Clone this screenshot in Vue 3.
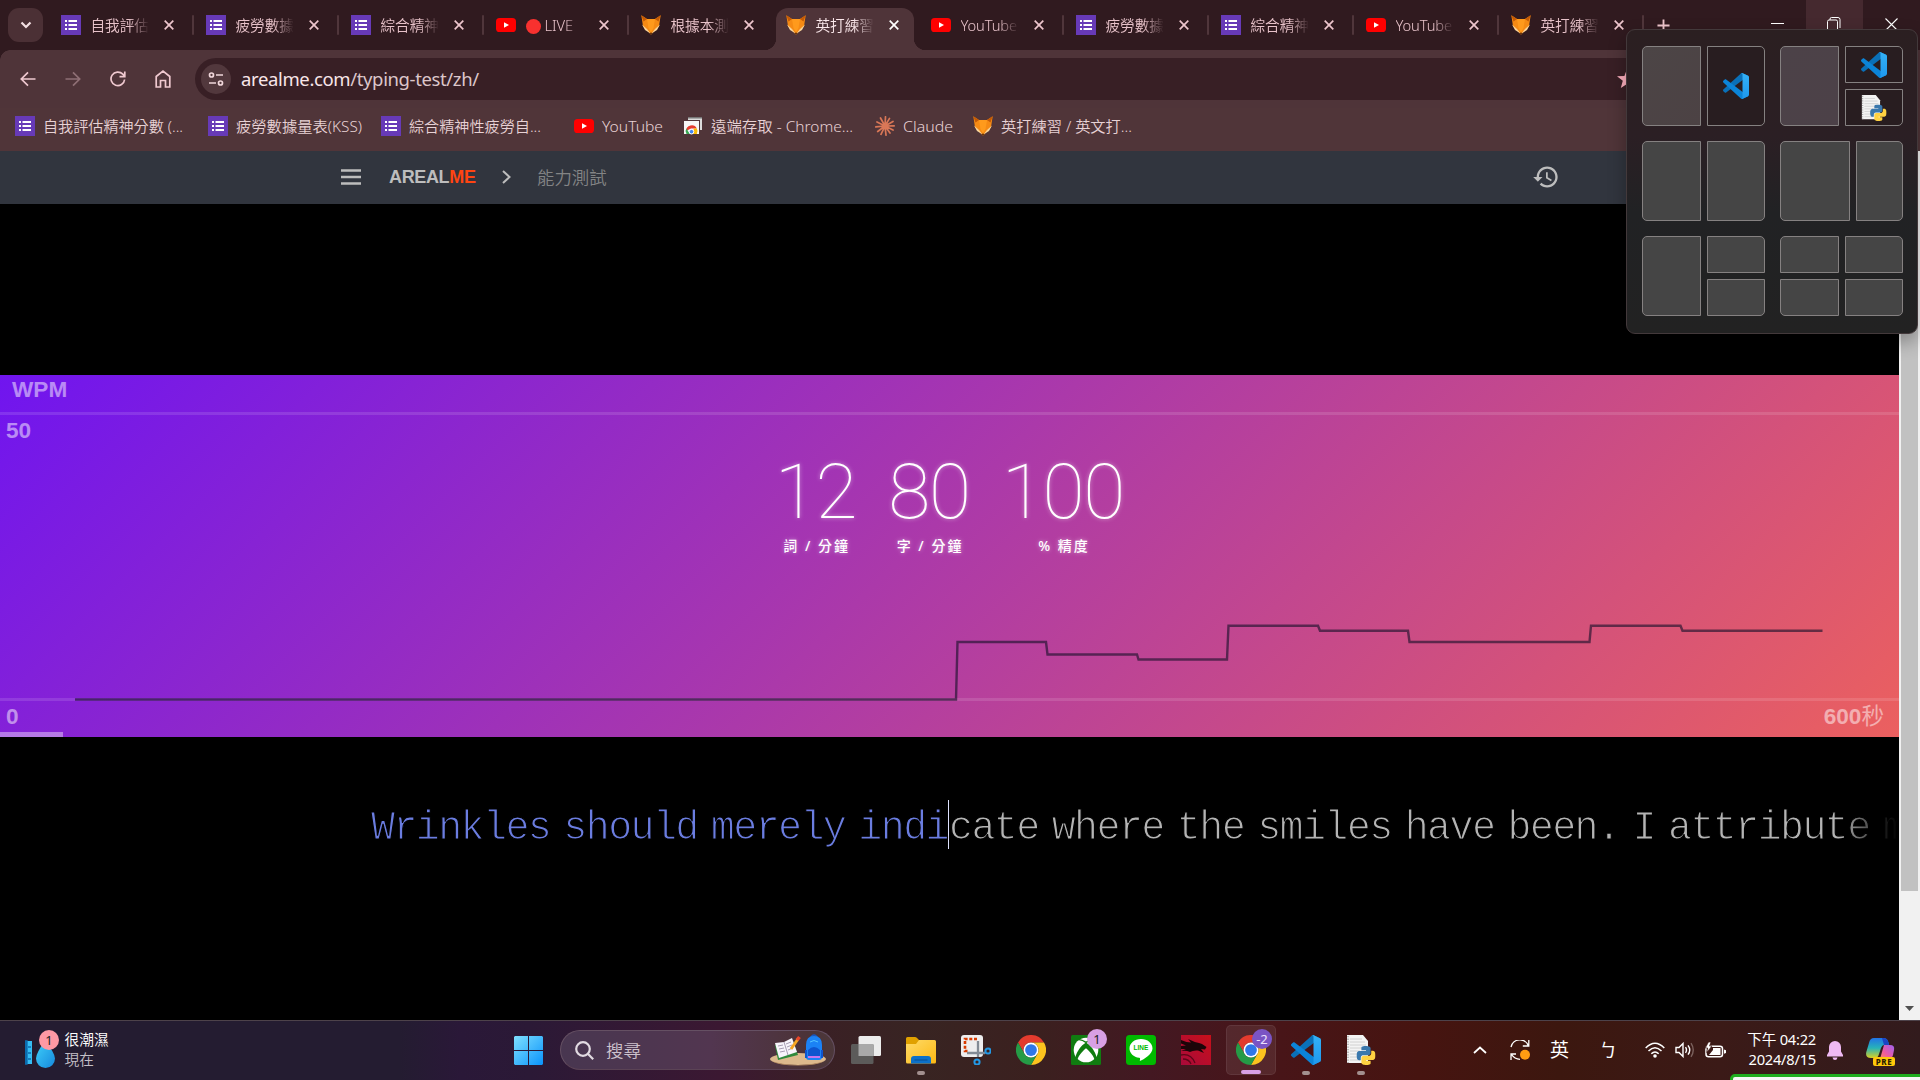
<script setup>
const tabs = [
  { icon: 'forms', title: '自我評估精神' },
  { icon: 'forms', title: '疲勞數據量表' },
  { icon: 'forms', title: '綜合精神性疲' },
  { icon: 'youtube', title: 'LIVE', live: true },
  { icon: 'fox', title: '根據本測試', bare: true },
  { icon: 'fox', title: '英打練習 /', active: true, bare: true },
  { icon: 'youtube', title: 'YouTube' },
  { icon: 'forms', title: '疲勞數據量表' },
  { icon: 'forms', title: '綜合精神性疲' },
  { icon: 'youtube', title: 'YouTube' },
  { icon: 'fox', title: '英打練習 /' },
]
const bookmarks = [
  { icon: 'forms', title: '自我評估精神分數 (...', width: 193, text: 140 },
  { icon: 'forms', title: '疲勞數據量表(KSS)', width: 173, text: 126 },
  { icon: 'forms', title: '綜合精神性疲勞自...', width: 193, text: 132 },
  { icon: 'youtube', title: 'YouTube', width: 109, text: 61 },
  { icon: 'remote', title: '遠端存取 - Chrome...', width: 192, text: 142 },
  { icon: 'claude', title: 'Claude', width: 98, text: 50 },
  { icon: 'fox', title: '英打練習 / 英文打...', width: 180, text: 131 },
]
const stats = [
  { value: '12', label: '詞 / 分鐘' },
  { value: '80', label: '字 / 分鐘' },
  { value: '100', label: '% 精度' },
]
const layouts = [
  [['left'], ['right', 'vscode']],
  [['left'], ['right top', 'vscode'], ['right bottom', 'python']],
  [['left'], ['right']],
  [['left wide'], ['right narrow']],
  [['left'], ['right top'], ['right bottom']],
  [['left top'], ['right top'], ['left bottom'], ['right bottom']],
]
const apps = [
  { icon: 'taskview' },
  { icon: 'folder', run: true },
  { icon: 'snip' },
  { icon: 'chrome' },
  { icon: 'xbox', badge: '1' },
  { icon: 'line', label: 'LINE' },
  { icon: 'dragon' },
  { icon: 'chrome', badge: '-2', active: true },
  { icon: 'vscode', run: true },
  { icon: 'python', run: true },
]
const wpm = 'M75 699.5H956L957.5 642H1046L1047.500 654.5H1137L1138.5 659.5H1227L1228.5 625.7H1318L1320 630.8H1408L1409.5 642H1589.5L1591 625.7H1680.5L1682.5 630.8H1822.5'
</script>

<template>
  <div class="screen">
    <svg class="defs" width="0" height="0">
      <defs>
        <linearGradient id="gWin" x1="0" y1="0" x2="1" y2="1"><stop offset="0" stop-color="#7fe0ff" /><stop offset="1" stop-color="#0a93fb" /></linearGradient>
        <linearGradient id="gFolder" x1="0" y1="0" x2="1" y2="1"><stop offset="0" stop-color="#ffdb68" /><stop offset="1" stop-color="#fcb813" /></linearGradient>
        <linearGradient id="gDrop" x1="0" y1="0" x2="1" y2="1"><stop offset="0" stop-color="#3fd0fa" /><stop offset="1" stop-color="#1689dd" /></linearGradient>
        <linearGradient id="gDragon" x1="0" y1="1" x2="1" y2="0"><stop offset="0" stop-color="#a80a3a" /><stop offset="1" stop-color="#c8101a" /></linearGradient>
        <linearGradient id="gCopA" x1="0" y1="0" x2="0" y2="1"><stop offset="0" stop-color="#2173e8" /><stop offset=".5" stop-color="#27b3b8" /><stop offset="1" stop-color="#d8d023" /></linearGradient>
        <linearGradient id="gCopB" x1="1" y1="0" x2="0" y2="1"><stop offset="0" stop-color="#9d62f0" /><stop offset=".6" stop-color="#ee5aa0" /><stop offset="1" stop-color="#fb8a59" /></linearGradient>
        <linearGradient id="gSlab" x1="0" y1="0" x2="0" y2="1"><stop offset="0" stop-color="#34b1f6" /><stop offset="1" stop-color="#1e98ee" /></linearGradient>
      </defs>
      <symbol id="forms" viewBox="0 0 20 20"><path fill="#673ab7" d="M0 0h20v20H0z" /><path fill="#fff" d="M4 5h2v2H4zM7.500 5H16v2H7.500zM4 9h2v2H4zM7.500 9H16v2H7.500zM4 13h2v2H4zM7.500 13H16v2H7.500z" /></symbol>
      <symbol id="youtube" viewBox="0 0 20 20"><rect y="3" width="20" height="14" rx="3.6" fill="#f00" /><path fill="#fff" d="M8 7.200 13 10l-5 2.800z" /></symbol>
      <symbol id="fox" viewBox="0 0 20 20"><path fill="#f58a14" d="M.3.3 6 4h8L19.700.3l-1.700 11L10 19.700 2 11.300z" /><path fill="#ff9a1c" d="M6 4h8l-1.500 9L10 17.500 7.500 13z" /><path fill="#c45a05" d="M.3.3 6 4 2.500 6.500zM19.700.3 14 4l3.500 2.500z" /><path fill="#f9d49a" d="m1 9.500 5 4.500 3.500 4.500-5.500-3.500zM19 9.500 14 14l-3.500 4.500 5.500-3.500z" /><path fill="#4a2108" d="m8.700 17.800 1.300 2 1.300-2z" /></symbol>
      <symbol id="remote" viewBox="0 0 20 20"><path fill="#dcdcdc" d="M5 1h14v13h-2V4H5z" /><path fill="#777" d="M5 1h14v1.500H5z" /><path fill="#f6f6f6" d="M1 5h15v13H1z" /><path fill="#e33b2e" d="M3 15A5.700 5.700 0 0 1 13.800 12.500H8z" /><path fill="#38a852" d="M3.300 12.500 7 18H3.500a5 5 0 0 1-.2-5.500z" /><path fill="#fbbc05" d="M13.800 12.500a5.500 5.500 0 0 1 0 5.500H9l2-5.500z" /><circle cx="8.500" cy="15.700" r="2.300" fill="#4285f4" stroke="#fff" /></symbol>
      <symbol id="claude" viewBox="0 0 20 20"><g stroke="#d97757" stroke-width="1.700" stroke-linecap="round"><path d="M10 10 10.500.8M10 10l4.500-7.600M10 10l8-4.500M10 10l9.200-.2M10 10l8 4M10 10l5 7M10 10l1 9.200M10 10l-4 8.300M10 10l-7.300 5.500M10 10l-9.200.8M10 10 2 6M10 10 5.500 2" /></g></symbol>
      <symbol id="chrome" viewBox="0 0 48 48"><path fill="#e33b2e" d="M3.200 12A24 24 0 0 1 44.800 12H24A12 12 0 0 0 13.600 30z" /><path fill="#fcc31e" d="M44.800 12A24 24 0 0 1 24 48L34.400 30A12 12 0 0 0 24 12z" /><path fill="#259b46" d="M24 48A24 24 0 0 1 3.200 12L13.600 30A12 12 0 0 0 34.400 30z" /><circle cx="24" cy="24" r="12" fill="#fff" /><circle cx="24" cy="24" r="9.400" fill="#2f77e8" /></symbol>
      <symbol id="vscode" viewBox="0 0 100 100"><path fill="#0a70b8" d="M96.500 10.800 75.900.9C73.500-.3 70.600.2 68.800 2.100L1.300 63.600C-.5 65.300-.5 68.100 1.300 69.800L6.800 74.800C8.300 76.100 10.500 76.200 12.100 75L93.400 13.400C96.100 11.300 100 13.300 100 16.700V16.400C100 14 98.600 11.800 96.500 10.800z" /><path fill="#0b84d8" d="M96.500 89.200 75.900 99.100C73.500 100.300 70.600 99.800 68.800 97.900L1.300 36.400C-.5 34.700-.5 31.900 1.300 30.200L6.800 25.200C8.300 23.900 10.500 23.800 12.100 25L93.400 86.600C96.100 88.700 100 86.700 100 83.300V83.600C100 86 98.600 88.200 96.500 89.200z" /><path fill="url(#gSlab)" d="M75.900 99.100C73.500 100.300 70.600 99.800 68.800 97.900 71 100.200 75 98.600 75 95.400V4.600C75 1.400 71-.2 68.800 2.100 70.600.2 73.500-.3 75.900.9L96.500 10.800C98.600 11.800 100 14 100 16.400V83.600C100 86 98.600 88.200 96.500 89.200z" /></symbol>
      <symbol id="snake" viewBox="0 0 24 24"><path d="M14.250.18l.9.2.73.26.59.3.45.32.34.34.25.34.16.33.1.3.04.26.02.2-.01.13V8.500l-.05.63-.13.55-.21.46-.26.38-.3.31-.33.25-.35.19-.35.14-.33.1-.3.07-.26.04-.21.02H8.770l-.69.05-.59.14-.5.22-.41.27-.33.32-.27.35-.2.36-.15.37-.1.35-.07.32-.04.27-.02.21v3.060H3.170l-.21-.03-.28-.07-.32-.12-.35-.18-.36-.26-.36-.36-.35-.46-.32-.59-.28-.73-.21-.88-.14-1.050-.05-1.230.06-1.220.16-1.040.24-.87.32-.71.36-.57.4-.44.42-.33.42-.24.4-.16.36-.1.32-.05.24-.01h.16l.06.01h8.160v-.83H6.180l-.01-2.750-.02-.37.05-.34.11-.31.17-.28.25-.26.31-.23.38-.2.44-.18.51-.15.58-.12.64-.1.71-.06.77-.04.84-.02 1.270.05z" /></symbol>
      <symbol id="python" viewBox="0 0 30 30"><path fill="#f4f4f4" d="M1 0h16l5 6v22H1z" /><path fill="none" stroke="#c9c9c9" stroke-width=".8" d="M4 4h12M4 7h15M4 10h16M4 13h16M4 16h10M4 19h10M4 22h10M4 25h10" /><path stroke="#9a9a9a" stroke-width="1.200" stroke-dasharray="1.300 1.300" d="M2 1v27" /><use href="#snake" x="10.500" y="11" width="19" height="19" fill="#3a78ad" /><g transform="rotate(180 20 20.500)"><use href="#snake" x="10.500" y="11" width="19" height="19" fill="#ffd242" /></g></symbol>
      <symbol id="taskview" viewBox="0 0 30 30"><rect x="7.500" y="1" width="22.500" height="20" rx="1.500" fill="#ececec" /><rect x="0" y="9" width="22.500" height="20" rx="1.500" fill="#5c5b5a" /><path fill="#a9a9a9" d="M7.500 9h15v12h-15z" /></symbol>
      <symbol id="folder" viewBox="0 0 30 30"><path fill="#e0a100" d="M0 3.500Q0 2 1.500 2H9q1 0 1.800.8L13 5h15v8H0z" /><path fill="url(#gFolder)" d="M0 9h10l3-4h15.500Q30 5 30 6.500V27q0 1.500-1.500 1.500h-27Q0 28.500 0 27z" /><path fill="#0c71c9" d="M5 28.500V24q0-3 3-3h14q3 0 3 3v4.500z" /><path stroke="#074f91" d="M8.500 25h13" /></symbol>
      <symbol id="snip" viewBox="0 0 30 30"><rect width="22" height="22" rx="3" fill="#eeeeef" /><path fill="none" stroke="#d83b01" stroke-width="2.600" stroke-dasharray="3 1.700" d="M16 4H4v12h3" /><path stroke="#838b95" stroke-width="2.300" d="M17 6v16M6 18h18" /><g fill="none" stroke="#2398e5" stroke-width="2"><circle cx="27" cy="16" r="2.600" /><circle cx="16" cy="27" r="2.600" /></g></symbol>
      <symbol id="xbox" viewBox="0 0 30 30"><rect width="30" height="30" rx="1.500" fill="#107c10" /><circle cx="15" cy="15" r="12.300" fill="#fff" /><path fill="#107c10" d="M7 5.300q3.500-.6 8 3 4.500-3.600 8-3l-.6-1.200Q20 3.500 15 6.500 10 3.500 7.600 4.100zM11.300 10.300C7 15 4 20.500 4.800 23.300l1.700 1.500C7 21.500 11 16.500 15 13.300c4 3.200 8 8.200 8.500 11.500l1.700-1.500C26 20.500 23 15 18.700 10.300L15 7.600z" /></symbol>
      <symbol id="line" viewBox="0 0 30 30"><rect width="30" height="30" rx="3.500" fill="#00b900" /><path fill="#fff" d="M15 4C8.500 4 3.500 8.200 3.500 13.400c0 4.700 4.100 8.600 9.700 9.300 1.300.3.900 1.300.6 3.300 4.200-1.800 12.700-7 12.700-12.600C26.500 8.200 21.500 4 15 4z" /></symbol>
      <symbol id="dragon" viewBox="0 0 30 30"><path fill="url(#gDragon)" d="M0 0h30v30H0z" /><path fill="#1c0508" d="M0 5q6 2.500 10 2.500L7 4q6 3 11 4l3 1 4.500 3-1.500 2.500-4-.5 3 4-6-2.500q-5-.5-8 1.500-4-2-9-1l5-2H0V11l5-.5-5-2z" /><path fill="none" stroke="#5c0618" stroke-width="1.300" d="M0 20q10-2 14 8M2 24q6 0 8 5" /></symbol>
    </svg>

    <div class="tabstrip">
      <div class="tabsearch"><svg width="12" height="8" viewBox="0 0 12 8"><path d="m1.500 1.500 4.500 4.500 4.500-4.500" fill="none" stroke="#f3dfe2" stroke-width="2.200" /></svg></div>
      <div v-for="(tab, i) in tabs" :key="i" class="tab" :class="{ active: tab.active }">
        <svg class="fav"><use :href="'#' + tab.icon" /></svg>
        <div class="title"><i v-if="tab.live" class="live"></i>{{ tab.title }}</div>
        <svg class="x" viewBox="0 0 10 10"><path d="m.7.7 8.600 8.600M9.300.7.7 9.300" /></svg>
        <span v-if="!tab.bare" class="sep"></span>
      </div>
      <svg class="plus" viewBox="0 0 14 14"><path d="M7 .5v13M.5 7h13" stroke="#efc6cd" stroke-width="2" /></svg>
      <div class="winbtns">
        <div><svg width="13" height="12"><path d="M0 5.500h13" stroke="#fff" /></svg></div>
        <div class="hover"><svg width="14" height="14" fill="none" stroke="#fff"><rect x=".5" y="3" width="10" height="11" rx="1.500" /><path d="M3 3V2Q3 .5 4.500.5H11Q13 .5 13 2.500V11" /></svg></div>
        <div><svg width="13" height="13" stroke="#fff" stroke-width="1.100"><path d="m.5.5 12 12M12.500.5l-12 12" /></svg></div>
      </div>
    </div>

    <div class="toolbar">
      <div class="nav">
        <svg viewBox="0 0 16 16"><path d="M15.500 8H1.500M8 1.300 1.300 8 8 14.700" /></svg>
        <svg class="dim" viewBox="0 0 16 16"><path d="M.5 8h14M8 1.300 14.700 8 8 14.700" /></svg>
        <svg viewBox="0 0 16 16"><path d="M14.600 8.500A6.800 6.800 0 1 1 12.800 3.200L14.600 5.200M14.800.5v5.200H9.500" /></svg>
        <svg class="home" viewBox="0 0 16 18"><path d="M1.200 17V6.500L8 1.200l6.800 5.300V17H10.500V10.500h-5V17z" /></svg>
      </div>
      <div class="omnibox">
        <div class="site"><svg width="16" height="16" viewBox="0 0 16 16" fill="none" stroke="#f0d6da" stroke-width="1.700"><circle cx="3.500" cy="4" r="2" /><path d="M8 4h7M1 12h7" /><circle cx="12.500" cy="12" r="2" /></svg></div>
        <div class="url"><b>arealme.com</b>/typing-test/zh/</div>
        <svg class="star" viewBox="0 0 20 20"><path fill="#ffb1c0" d="m10 0 2.600 6.900 7.400.3-5.800 4.600 2 7.200-6.200-4.100L3.800 19l2-7.200L0 7.200l7.400-.3z" /></svg>
      </div>
    </div>

    <div class="bookmarks">
      <div v-for="(b, i) in bookmarks" :key="i" class="bm" :style="{ width: b.width + 'px' }">
        <svg class="fav"><use :href="'#' + b.icon" /></svg>
        <svg class="bmt" :width="b.text" height="24"><text x="0" y="17.500" :textLength="b.text" lengthAdjust="spacingAndGlyphs">{{ b.title }}</text></svg>
      </div>
    </div>

    <div class="viewport">
      <div class="page">
        <header>
          <svg class="menu" viewBox="0 0 20 16"><path d="M0 1.500h20M0 8h20M0 14.500h20" /></svg>
          <div class="logo">AREAL<span>ME</span></div>
          <svg class="chev" viewBox="0 0 9 14"><path d="m1 1 6.500 6L1 13" /></svg>
          <div class="crumb">能力測試</div>
          <svg class="history" viewBox="0 0 24 24"><path fill="#bdbdbd" d="M13 3c-4.970 0-9 4.030-9 9H1l3.890 3.890.07.14L9 12H6c0-3.870 3.130-7 7-7s7 3.130 7 7-3.130 7-7 7c-1.930 0-3.680-.79-4.940-2.060l-1.420 1.420C8.270 19.990 10.510 21 13 21c4.970 0 9-4.030 9-9s-4.030-9-9-9zm-1 5v5l4.280 2.540.72-1.210-3.500-2.080V8H12z" /></svg>
        </header>
        <section class="chart">
          <svg class="plot" viewBox="0 375 1899 362">
            <path d="M0 413.500H1899M0 699.500H1899" stroke="#fff" stroke-opacity=".12" stroke-width="3" />
            <path :d="wpm" fill="none" stroke="#18102a" stroke-opacity=".62" stroke-width="2.400" />
          </svg>
          <div class="lab wpm">WPM</div>
          <div class="lab fifty">50</div>
          <div class="stats">
            <div v-for="s in stats" :key="s.label" class="stat"><div class="num">{{ s.value }}</div><div class="cap">{{ s.label }}</div></div>
          </div>
          <div class="foot lab"><span>0</span><span>600<em>秒</em></span></div>
          <div class="progress"></div>
        </section>
        <section class="typing">
          <div class="done">Wrinkles should merely indi</div>
          <div class="todo">cate where the smiles have been. I attribute my</div>
        </section>
      </div>
      <div class="scroll"><div class="thumb"></div><svg width="9" height="5"><path fill="#505050" d="M0 0h9L4.500 5z" /></svg></div>
    </div>

    <footer class="taskbar">
      <div class="weather">
        <svg width="30" height="36" viewBox="0 0 30 36"><rect x="1" y="9" width="6" height="23" fill="#36bdf4" /><path d="M0 9h2v23H0M3 15h3M3 21h3M3 27h3" stroke="#0b6cae" stroke-width="1.300" fill="#0b6cae" /><path fill="url(#gDrop)" d="M20 9q-9 12-9 17.500a9.500 9.500 0 0 0 19 0Q30 21 20 9z" /></svg>
        <span class="wbadge">1</span>
        <div class="wt"><div>很潮濕</div><div class="now">現在</div></div>
      </div>
      <svg class="start" viewBox="0 0 29 29"><path fill="url(#gWin)" d="M1 0h13v14H0V1zM15 0h13l1 1v13H15zM0 15h14v14H1l-1-1zM15 15h14v13l-1 1H15z" /></svg>
      <div class="search">
        <svg width="19" height="19" viewBox="0 0 19 19" fill="none" stroke="#e2dbe2" stroke-width="2.200"><circle cx="8" cy="8" r="6.800" /><path d="m12.800 12.800 5.400 5.400" /></svg>
        <span>搜尋</span>
        <svg class="school" viewBox="0 0 58 32"><ellipse cx="29" cy="25" rx="28" ry="6" fill="#dcb98d" /><path fill="#b78d62" d="M2 27q27 8 54 0-8 4.500-27 4.500T2 27" /><path fill="#2f8a3c" d="m6 11 18-4 5 14-20 5z" /><path fill="#f7f4fb" d="m6 9 9-1 8-4 5 14-9 3-9 3z" /><path stroke="#a79db3" fill="none" d="m15 8 4 13M9 12l5-1M10 15l5-1M11 18l5-1M17 10l5-2M18 13l5-2M19 16l5-2" /><path stroke="#f6a623" stroke-width="3" d="m22 15 7-10" /><path stroke="#e8462b" stroke-width="3.500" d="m28 6 2.500-3" /><path fill="none" stroke="#1559c8" stroke-width="1.500" d="M42 3q3-4 6 0" /><path fill="#1b82f5" d="M37 11q0-9 8-9t8 9v12q0 3-3 3H40q-3 0-3-3z" /><path fill="#0e55cf" d="M36 16h2v8h-2zM52 16h2v8h-2zM39 16q6-6 12 0v6H39z" /><path stroke="#55c5ff" fill="none" d="M41 8q4-3 8 0" /><path fill="#c676ee" d="M39 22h12v2H39z" /></svg>
      </div>
      <div class="apps">
        <div v-for="(a, i) in apps" :key="i" class="app" :class="{ on: a.active, run: a.run }">
          <svg class="ai"><use :href="'#' + a.icon" /></svg>
          <span v-if="a.label" class="line">{{ a.label }}</span>
          <span v-if="a.badge" class="badge">{{ a.badge }}</span>
        </div>
      </div>
      <div class="tray">
        <svg class="up" viewBox="0 0 14 8"><path d="m1 7 6-5.500L13 7" fill="none" stroke="#fff" stroke-width="1.800" /></svg>
        <svg class="sync" viewBox="0 0 20 20" fill="none" stroke="#fff" stroke-width="1.300"><path d="M1 7A9 9 0 0 1 18.300 5.800M18.800 0v6h-6M6 14H1v6M1.500 14.500Q4.500 19 10 19.300" /><circle cx="15" cy="14.700" r="5" fill="#ff9c12" stroke="none" /></svg>
        <span class="ime">英</span><span class="bpmf">ㄅ</span>
        <svg class="wifi" viewBox="0 0 20 16" fill="none" stroke="#fff" stroke-width="1.500"><path d="M.7 6Q10-3.500 19.300 6M3.500 9Q10 2.300 16.500 9M6.300 11.800Q10 8 13.700 11.800" /><circle cx="10" cy="14" r="1.800" fill="#fff" stroke="none" /></svg>
        <svg class="vol" viewBox="0 0 20 16" fill="none" stroke="#fff" stroke-width="1.400"><path d="M1 5.500h3L8 1.500v13l-4-4H1zM10.500 5.200q2 2.800 0 5.600M13 3.300q3.500 4.700 0 9.400" /><path d="M16 1.200q4.500 6.800 0 13.600" stroke="#7a605c" /></svg>
        <svg class="bat" viewBox="0 0 21 16"><rect x="1" y="4.200" width="16.500" height="10.600" rx="2.500" fill="none" stroke="#fff" stroke-width="1.500" /><path fill="#fff" d="M8 6h7.500v7H4l4-5zM19 7.500l2 .8v2.600l-2 .8z" /><path fill="#fff" stroke="#3d1814" stroke-width=".7" d="M3.500 0 .3 6h2.400l-1 4.500L7 4H4.500L6 0z" /></svg>
        <div class="clock"><div>下午 04:22</div><div>2024/8/15</div></div>
        <svg class="bell" viewBox="0 0 16 19"><path fill="#efb9f3" d="M8 0a6 6 0 0 0-6 6v4.500L0 14v1.500h16V14l-2-3.500V6a6 6 0 0 0-6-6zM5.500 16.500h5q-.5 2.500-2.500 2.500t-2.500-2.500" /></svg>
        <div class="copilot">
          <svg width="29" height="28" viewBox="0 0 29 28"><path fill="url(#gCopB)" d="M18 7h6q5 0 4 5l-1 5q-1 4-5 4h-8z" /><path fill="url(#gCopA)" d="M8 0h10q4 0 5 7h-5q-2 0-3 3l-2 6q-1 4-4 4H5q-6 0-4.700-6L3 5q1-5 5-5z" /><path fill="#1b45c4" d="M16 0h2q4 0 5 7h-5z" /></svg>
          <span>PRE</span>
        </div>
      </div>
      <div class="frame"></div>
    </footer>

    <div class="snap">
      <div v-for="(l, i) in layouts" :key="i" class="layout">
        <div v-for="(z, j) in l" :key="j" class="zone" :class="[z[0], { filled: z[1] }]"><svg v-if="z[1]"><use :href="'#' + z[1]" /></svg></div>
      </div>
    </div>
  </div>
</template>

<style>
body { margin: 0; background: #000; overflow: hidden; }
</style>

<style scoped>
* { box-sizing: border-box; }
svg { display: block; flex: none; }
.screen { position: relative; width: 1920px; height: 1080px; overflow: hidden; display: flex; flex-direction: column; background: #000; font-family: "Noto Sans", "Noto Sans CJK TC", sans-serif; }
.defs { position: absolute; }
.tabstrip { height: 50px; background: #301a1f; display: flex; align-items: center; flex: none; }
.tabsearch { width: 35px; height: 34px; margin: 0 9px 0 8px; border-radius: 11px; background: #4b3035; display: flex; align-items: center; justify-content: center; flex: none; }
.tab { position: relative; width: 145px; height: 50px; padding-left: 8.500px; display: flex; align-items: center; flex: none; }
.fav { width: 20px; height: 20px; }
.title { width: 58px; margin-left: 10px; overflow: hidden; white-space: nowrap; font-size: 14.700px; line-height: 24px; color: #e8c3ca; letter-spacing: -.1px; font-weight: 350; -webkit-mask: linear-gradient(90deg, #000 65%, transparent); mask: linear-gradient(90deg, #000 65%, transparent); }
.live { display: inline-block; width: 15px; height: 15px; border-radius: 50%; background: #f8312f; vertical-align: -2.500px; margin-right: 4px; }
.x { width: 10px; height: 10px; margin-left: 15.500px; }
.x path { stroke: #eec6cd; stroke-width: 1.700; }
.sep { width: 2px; height: 20px; margin-left: 17.500px; background: #50363b; border-radius: 1px; }
.tab.active::before { content: ""; position: absolute; left: -1px; top: 8px; width: 138px; height: 42px; background: #4f3439; border-radius: 12px 12px 0 0; }
.tab.active::after { content: ""; position: absolute; left: -13px; bottom: 0; width: 162px; height: 12px; background: radial-gradient(circle at 0 0, transparent 12px, #4f3439 12.500px) left / 12px 12px no-repeat, radial-gradient(circle at 100% 0, transparent 12px, #4f3439 12.500px) right / 12px 12px no-repeat; }
.tab.active > * { position: relative; z-index: 1; }
.tab.active .title { color: #fbe8eb; }
.tab.active .x path { stroke: #fff; }
.plus { width: 13px; height: 13px; margin-left: 10px; }
.winbtns { display: flex; margin-left: auto; height: 50px; }
.winbtns div { width: 57px; height: 48px; display: flex; align-items: center; justify-content: center; }
.winbtns .hover { background: #45292f; padding-right: 2px; }
.toolbar { height: 58px; background: #4f3439; display: flex; align-items: center; flex: none; box-shadow: -1px 0 #301a1f; border-top-left-radius: 10px; }
.screen > .toolbar { background: radial-gradient(circle at 10px 10px, #4f3439 9.500px, #301a1f 10px) 0 0 / 10px 10px no-repeat, linear-gradient(#4f3439, #4f3439); border-radius: 0; }
.nav { display: flex; width: 195px; padding-left: 19.500px; gap: 29px; align-items: center; }
.nav svg { width: 16px; height: 16px; fill: none; stroke: #f0c9d0; stroke-width: 1.700; }
.nav .dim { stroke: #8f6f75; }
.nav .home { height: 18px; }
.omnibox { flex: 1; height: 42px; margin-right: 250px; border-radius: 21px; background: #381f25; display: flex; align-items: center; padding-left: 6px; }
.site { width: 30px; height: 30px; border-radius: 50%; background: #52383d; display: flex; align-items: center; justify-content: center; }
.url { margin-left: 10px; width: 1373px; font-size: 18.500px; letter-spacing: -.37px; color: #dcc6ca; white-space: nowrap; line-height: 30px; }
.url b { font-weight: 400; color: #f8e6e9; }
.star { width: 20px; height: 20px; margin-left: 3px; }
.bookmarks { height: 43px; padding: 0 0 7px 15px; background: #503539; display: flex; align-items: center; flex: none; }
.bm { display: flex; align-items: center; gap: 8px; flex: none; }
.bmt { overflow: visible; }
.bmt text { font-size: 14.700px; fill: #e8d2d5; font-weight: 350; }
.viewport { height: 869px; display: flex; flex: none; }
.page { width: 1899px; overflow: hidden; }
header { height: 53px; background: #31353e; display: flex; align-items: center; padding: 0 0 1px 341px; }
.menu { width: 20px; height: 16px; }
.menu path { stroke: #bdbdbd; stroke-width: 2.300; }
.logo { margin-left: 28px; width: 113px; font: 700 18px "Liberation Sans", sans-serif; letter-spacing: -.35px; color: #bdbdbd; }
.logo span { color: #ff4411; }
.chev { width: 9px; height: 14px; }
.chev path { fill: none; stroke: #bdbdbd; stroke-width: 2; }
.crumb { margin-left: 26px; width: 996px; font-size: 17.400px; line-height: 24px; color: #838485; font-weight: 350; }
.history { width: 28px; height: 28px; margin-left: -1px; }
.chart { position: relative; height: 362px; margin-top: 171px; background: linear-gradient(135deg, #7015ef, #eb605f); overflow: hidden; }
.plot { position: absolute; inset: 0; width: 1899px; height: 362px; }
.lab { font: 700 22.600px/26px "Liberation Sans", "Noto Sans CJK TC", sans-serif; color: rgba(255, 255, 255, .5); }
.lab em { font-style: normal; font-weight: 400; }
.wpm { padding: 2px 0 0 12px; }
.fifty { padding: 15px 0 0 6px; }
.stats { position: relative; display: flex; justify-content: center; gap: 31.800px; margin-top: 4px; color: #fff; text-align: center; text-shadow: 0 0 4px rgba(255, 255, 255, .5); }
.num { font: 100 76.800px/88px Roboto, sans-serif; letter-spacing: -1.200px; }
.cap { margin-top: -2px; font-size: 14px; line-height: 24px; letter-spacing: 2px; text-indent: 2px; font-weight: 500; }
.foot { position: absolute; left: 6px; right: 15px; bottom: 7px; display: flex; justify-content: space-between; }
.progress { position: absolute; left: 0; bottom: 0; width: 62.500px; height: 5px; background: rgba(255, 255, 255, .4); }
.typing { display: flex; height: 49px; margin-top: 63px; font: 40px/57px "Liberation Mono", monospace; letter-spacing: -1.600px; word-spacing: -9.300px; white-space: nowrap; -webkit-text-stroke: 1.200px #000; -webkit-mask: linear-gradient(90deg, #000 1840px, rgba(0, 0, 0, .2) 1880px, transparent 1899px); mask: linear-gradient(90deg, #000 1840px, rgba(0, 0, 0, .2) 1880px, transparent 1899px); }
.done { width: 949px; display: flex; justify-content: flex-end; color: #6b7de0; border-right: 1px solid #dfe3ff; }
.todo { width: 950px; color: #b4b4b4; }
.scroll { width: 21px; background: #f1f1f1; display: flex; flex-direction: column; align-items: center; justify-content: space-between; padding-bottom: 9px; }
.thumb { width: 17px; height: 740px; background: #c1c1c1; }
.taskbar { position: relative; height: 60px; flex: none; display: flex; align-items: center; border-top: 1px solid #4d424a; padding-bottom: 1px; color: #fff; background: linear-gradient(90deg, #241c31 0, #241c31 400px, #2a1838 460px, #2b1936 530px, #3b1832 720px, #3a2025 820px, #382422 920px, #3b201f 1040px, #431822 1150px, #481518 1280px, #461410 1420px, #3c170f 1560px, #3b1a17 1720px, #321b1d 1920px); }
.weather { position: relative; display: flex; width: 514px; padding-left: 25px; align-items: center; }
.wbadge { position: absolute; left: 39px; top: -2px; width: 20px; height: 20px; border-radius: 50%; background: #ff99a4; color: #222; font-size: 13px; line-height: 20px; text-align: center; }
.wt { margin: -3px 0 0 9.500px; font-size: 14.700px; line-height: 20px; font-weight: 350; }
.now { color: #c5c0c8; }
.start { width: 29px; height: 29px; }
.search { margin-left: 17px; width: 275px; height: 40px; border-radius: 20px; border: 1px solid #655063; border-bottom-color: #5b4355; background: linear-gradient(90deg, #483650, #523650 55%, #4c3338 90%, #4c383a); display: flex; align-items: center; padding-left: 14px; }
.search span { margin: -2px 0 0 12px; font-size: 17.500px; color: #cdc2cd; font-weight: 350; width: 163px; }
.school { width: 58px; height: 32px; }
.apps { display: flex; margin-left: 6px; gap: 5px; }
.app { position: relative; width: 50px; height: 50px; padding: 10px; border-radius: 5px; }
.ai { width: 30px; height: 30px; }
.app.on { background: rgba(255, 255, 255, .08); border: 1px solid rgba(255, 255, 255, .07); padding: 9px; }
.app.run::after, .app.on::after { content: ""; position: absolute; left: 21px; bottom: 0; width: 8px; height: 4px; border-radius: 2px; background: #a3908f; }
.app.on::after { left: 14px; width: 20px; background: #d9a0e6; }
.badge { position: absolute; left: 26px; top: 4px; width: 20px; height: 20px; border-radius: 50%; background: #d8a0e4; color: #222; font-size: 13px; line-height: 20px; text-align: center; }
.on .badge { left: 25px; top: 3px; background: #7a54c4; color: #ece0ff; }
.line { position: absolute; left: 10px; top: 17px; width: 30px; text-align: center; font: 700 6.500px/12px "Liberation Sans", sans-serif; color: #00b900; }
.tray { display: flex; align-items: center; margin-left: 87px; height: 58px; }
.up { width: 14px; height: 8px; margin-right: 23px; }
.sync { width: 20px; height: 20px; margin-right: 20px; }
.ime { width: 20px; font-size: 19px; line-height: 24px; margin-right: 29px; }
.bpmf { width: 18px; font-size: 18px; line-height: 24px; margin-right: 28px; }
.wifi { width: 20px; height: 16px; margin-right: 10px; }
.vol { width: 20px; height: 16px; margin-right: 10px; }
.bat { width: 21px; height: 16px; }
.clock { width: 91px; margin-top: -3px; padding-right: 1px; text-align: right; font-size: 14.700px; line-height: 20px; letter-spacing: -.25px; white-space: nowrap; }
.bell { width: 16px; height: 19px; margin-left: 10px; }
.copilot { position: relative; margin-left: 23px; margin-top: 4px; }
.copilot span { position: absolute; left: 7px; top: 19px; width: 22px; height: 9px; border-radius: 2px; background: #ffc80a; color: #2a1d00; font-size: 8px; font-weight: 800; line-height: 9px; text-align: center; letter-spacing: .5px; }
.frame { position: absolute; left: 1730px; right: -5px; bottom: -10px; height: 16px; border: 3px solid #1fae1f; border-radius: 5px; background: #f7f7f7; }
.snap { position: absolute; left: 1626px; top: 29px; width: 292px; height: 305px; border: 1px solid #43393b; border-radius: 9px; background: linear-gradient(#2b1f21, #2b1f24 35%, #212224 60%, #222); padding: 16px 14px 0 15px; display: grid; grid-template-columns: 123px 123px; column-gap: 15px; grid-auto-rows: 80px; row-gap: 15px; box-shadow: 0 8px 18px rgba(0, 0, 0, .3); align-content: start; }
.layout { display: grid; grid-template-columns: 59px 58px; grid-template-rows: 37px 37px; gap: 6px; }
.layout:has(.wide) { grid-template-columns: 70px 47px; }
.zone { border: 1px solid #858181; background: #454545; display: flex; align-items: center; justify-content: center; grid-row: 1 / 3; }
.layout:nth-child(-n+2) .zone { background: linear-gradient(135deg, #4c4546, #4c4244); }
.layout:nth-child(2) .zone { background: linear-gradient(135deg, #4c4248, #4c4148); }
.layout .zone.filled { background: #281d20 !important; }
.zone.left { grid-column: 1; border-radius: 5px 0 0 5px; }
.zone.right { grid-column: 2; border-radius: 0 5px 5px 0; }
.zone.top { grid-row: 1; border-bottom-left-radius: 0; border-bottom-right-radius: 0; }
.zone.bottom { grid-row: 2; border-top-left-radius: 0; border-top-right-radius: 0; }
.zone svg { width: 26px; height: 26px; }
</style>
